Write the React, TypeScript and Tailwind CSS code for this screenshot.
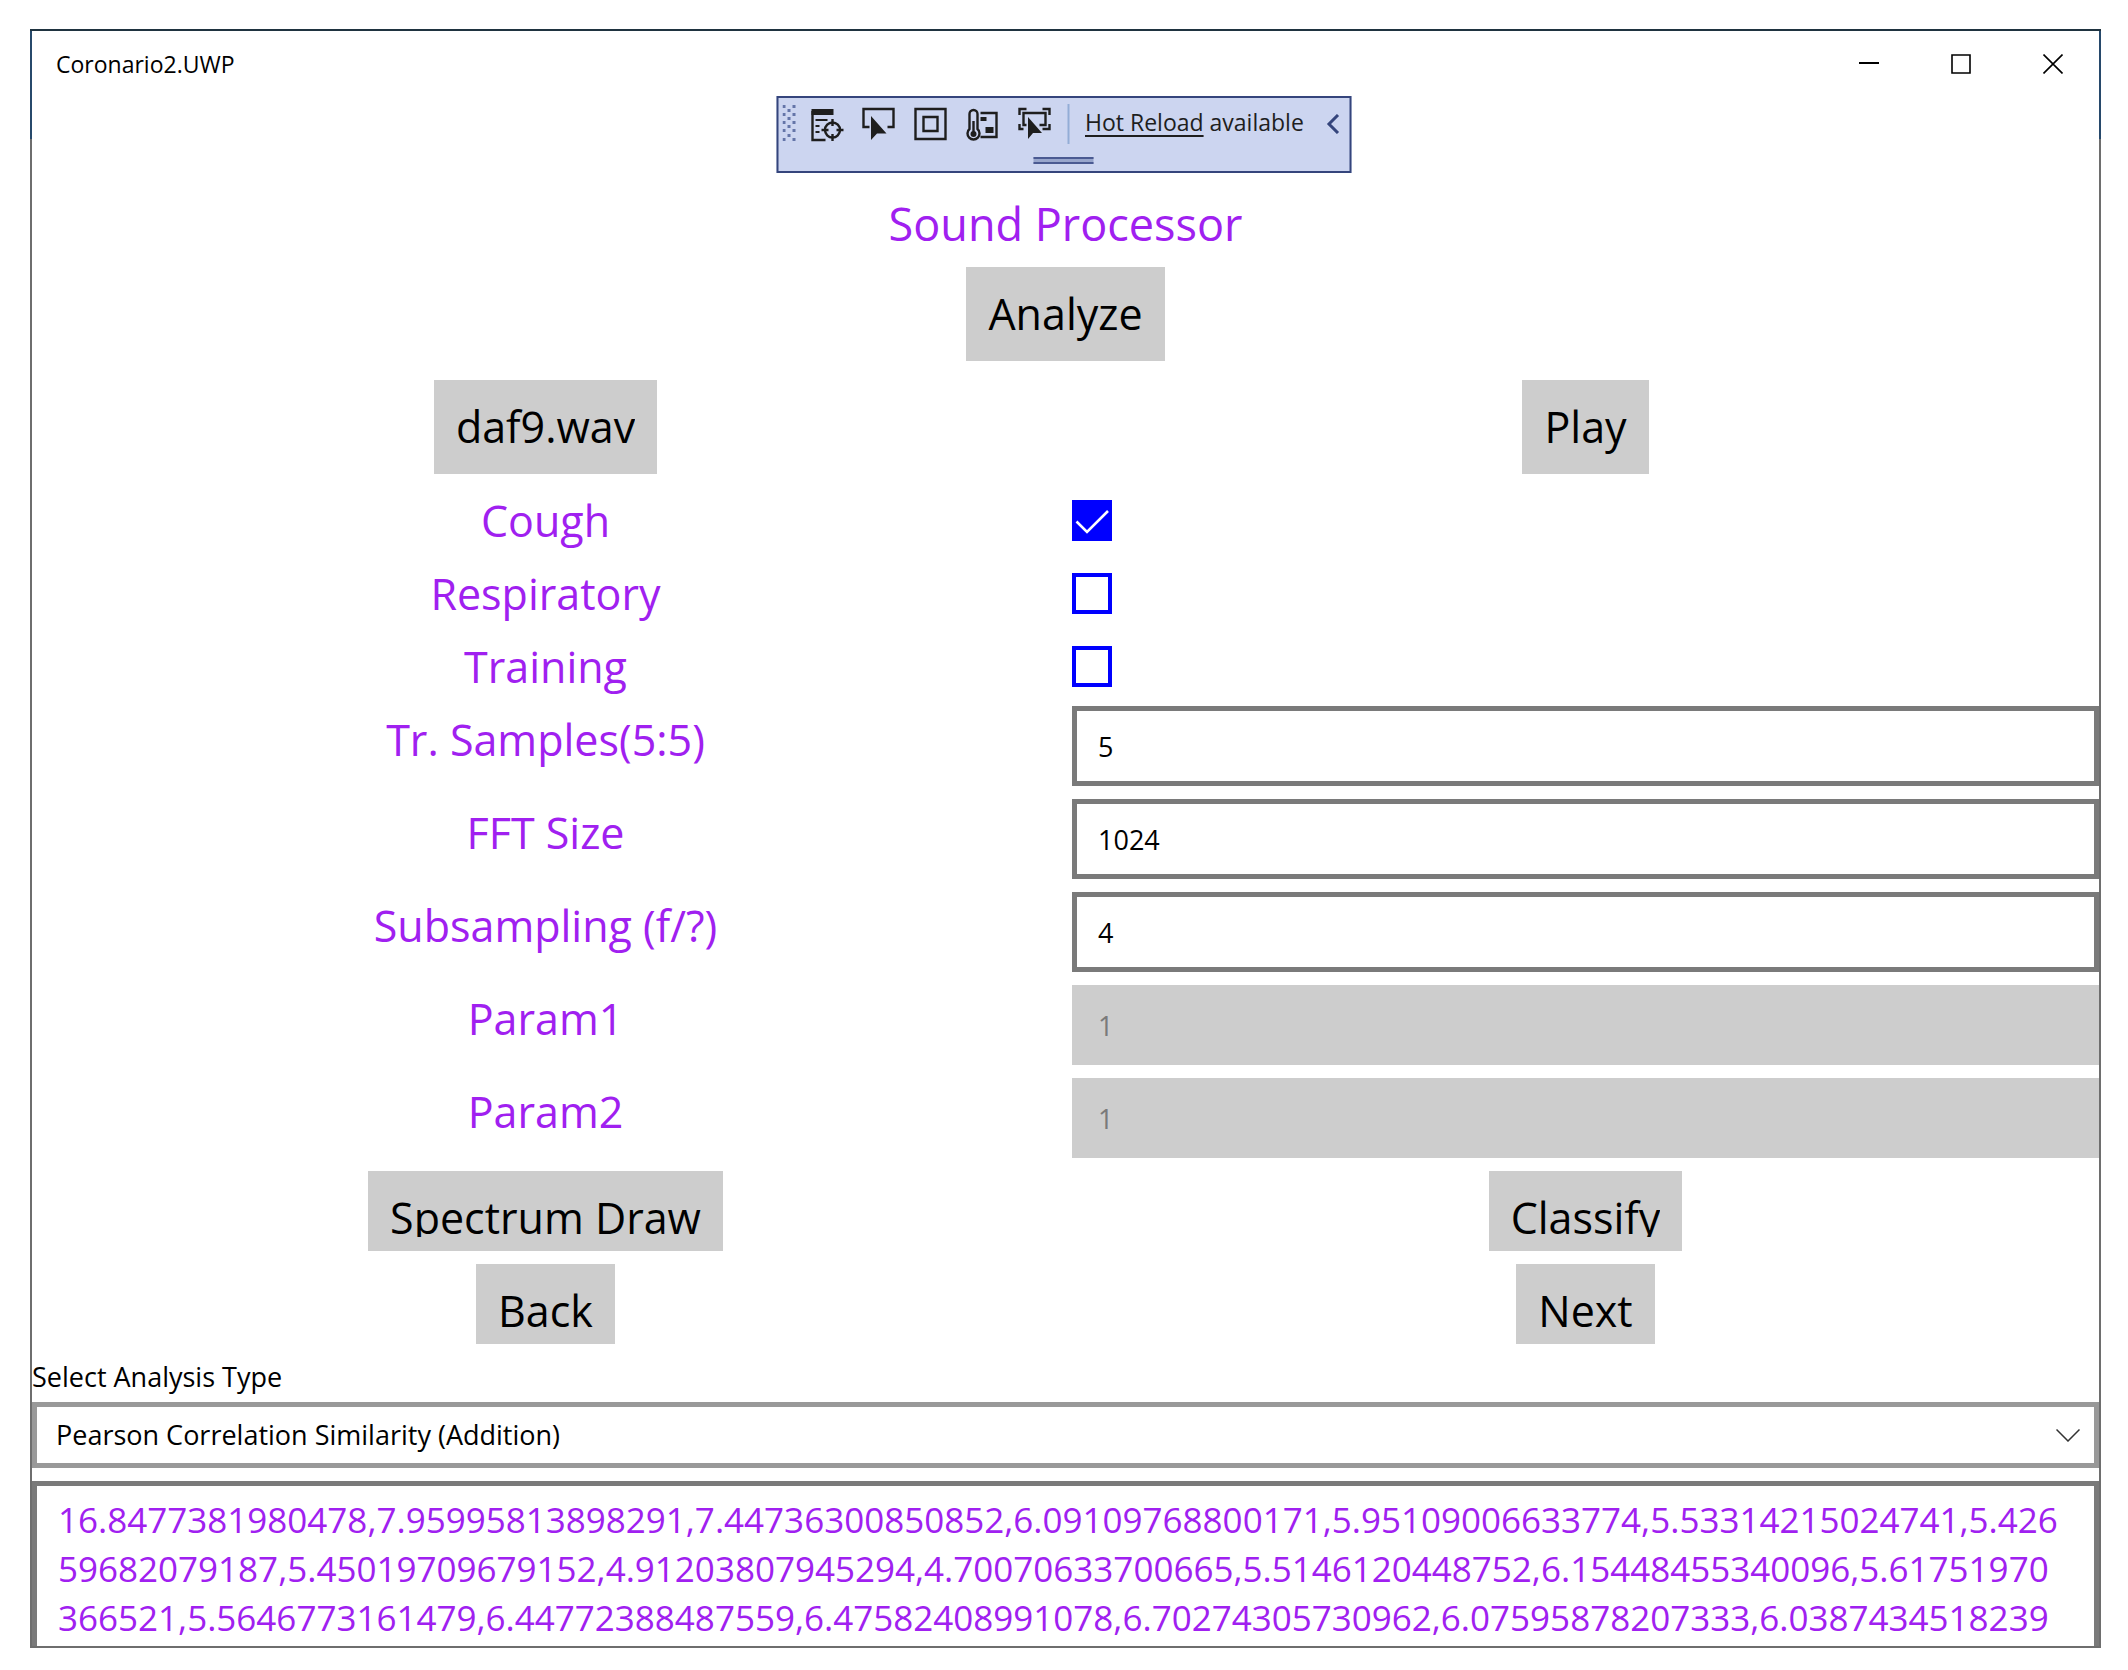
import { ReactNode, useState } from "react";
import clsx from "clsx";

const RESULT =
  "16.8477381980478,7.95995813898291,7.44736300850852,6.09109768800171,5.95109006633774,5.53314215024741,5.42659682079187,5.45019709679152,4.91203807945294,4.70070633700665,5.5146120448752,6.15448455340096,5.61751970366521,5.5646773161479,6.44772388487559,6.47582408991078,6.70274305730962,6.07595878207333,6.0387434518239";

const ANALYSIS_TYPES = ["Pearson Correlation Similarity (Addition)"];

function GrayButton({
  children,
  short,
}: {
  children: ReactNode;
  short?: boolean;
}) {
  return (
    <button
      type="button"
      className={clsx(
        "flex items-start justify-self-center bg-[#cdcdcd] px-[22px] py-[14px] text-[43px] leading-[66px] text-black",
        short ? "h-[80px]" : "h-[94px]",
      )}
    >
      <span className="block h-full overflow-hidden">{children}</span>
    </button>
  );
}

function FieldLabel({ id, children }: { id: string; children: ReactNode }) {
  return (
    <label
      htmlFor={id}
      className="text-center text-[43px] leading-[68px] text-[#a020f0]"
    >
      {children}
    </label>
  );
}

function CheckRow({
  id,
  label,
  defaultChecked,
}: {
  id: string;
  label: string;
  defaultChecked?: boolean;
}) {
  return (
    <div className="grid h-[60px] grid-cols-2 gap-x-[13px]">
      <FieldLabel id={id}>{label}</FieldLabel>
      <div className="grid justify-items-start pt-[13px]">
        <input
          id={id}
          type="checkbox"
          defaultChecked={defaultChecked}
          className="peer col-start-1 row-start-1 h-[41px] w-[40px] appearance-none border-4 border-[#0000ff] bg-white checked:bg-[#0000ff]"
        />
        <svg
          viewBox="0 0 41 41"
          className="pointer-events-none invisible col-start-1 row-start-1 size-[41px] peer-checked:visible"
          fill="none"
          stroke="#fff"
          strokeWidth="2.6"
        >
          <path d="M4.5 21.5 15 32 36 11" />
        </svg>
      </div>
    </div>
  );
}

function EntryRow({
  id,
  label,
  value,
  disabled,
}: {
  id: string;
  label: string;
  value: string;
  disabled?: boolean;
}) {
  return (
    <div className="grid h-[80px] grid-cols-2 gap-x-[13px]">
      <FieldLabel id={id}>{label}</FieldLabel>
      <input
        id={id}
        type="text"
        defaultValue={value}
        disabled={disabled}
        className="h-[80px] w-full border-[5px] border-[#7a7a7a] bg-white px-[21px] text-[27px] text-black outline-none disabled:border-[#cdcdcd] disabled:bg-[#cdcdcd] disabled:text-[#7a7a7a]"
      />
    </div>
  );
}

function ToolButton({ label, children }: { label: string; children: ReactNode }) {
  return (
    <button type="button" aria-label={label} className="size-[32px]">
      <svg
        viewBox="0 0 32 32"
        className="size-[32px] overflow-visible"
        fill="none"
        stroke="#1e1e1e"
        strokeWidth="2.4"
      >
        {children}
      </svg>
    </button>
  );
}

function DebugToolbar() {
  return (
    <div className="absolute top-[65px] left-1/2 -ml-[2px] flex h-[77px] w-[575px] -translate-x-1/2 flex-col border-2 border-[#35457c] bg-[#ccd5f0]">
      <div className="flex h-[52px] items-center pl-[4px]">
        <svg width="14" height="38" viewBox="0 0 14 38" fill="#6475a8">
          {[0, 8, 16, 24, 33].map((y) => (
            <g key={y}>
              <rect x="0" y={y} width="3" height="3" />
              <rect x="10" y={y} width="3" height="3" />
            </g>
          ))}
          {[4, 12, 20, 29].map((y) => (
            <rect key={y} x="5" y={y} width="3" height="3" />
          ))}
        </svg>
        <div className="ml-[14px] flex gap-[20px]">
          <ToolButton label="Go to Live Visual Tree">
            <path d="M1 1h22v6H1z" fill="#1e1e1e" stroke="none" />
            <path d="M2 3v29h13" />
            <path d="M5 12h12M5 18h4M5 24h4" strokeWidth="2" />
            <circle cx="22" cy="22" r="7.5" />
            <path d="M22 11v7M22 26v7M11 22h7M26 22h7" />
          </ToolButton>
          <ToolButton label="Select Element">
            <path d="M7 19H1V1h30v18h-6" />
            <path
              d="M8.500 8v24l6-6.500h9.500z"
              fill="#1e1e1e"
              stroke="none"
            />
          </ToolButton>
          <ToolButton label="Display Layout Adorners">
            <path d="M1 1h30v30H1z" />
            <path d="M9 9h14v14H9z" />
          </ToolButton>
          <ToolButton label="Track Focused Element">
            <path d="M14 5h16v24H14" />
            <path d="M14 9h6v4h-6zM19 19h8v6h-8z" fill="#1e1e1e" stroke="none" />
            <path d="M3 21V6a4 4 0 0 1 8 0v15a6 6 0 1 1-8 0z" fill="#ccd5f0" />
            <path d="M7 13v12" />
            <circle cx="7" cy="26" r="3" fill="#1e1e1e" stroke="none" />
          </ToolButton>
          <ToolButton label="Scan for Binding Failures">
            <path d="M1 7V1h7M24 1h7v6M1 16v5h4M31 16v5h-7" />
            <path d="M8 17H5V5h22v12h-6" />
            <path
              d="M9.500 9v22l5-6h9z"
              fill="#1e1e1e"
              stroke="none"
            />
          </ToolButton>
        </div>
        <span className="ml-[17px] h-[40px] w-[2px] bg-[#93add6]" />
        <span className="ml-[16px] pb-[4px] text-[23px] whitespace-nowrap text-[#1e1e1e]">
          <a href="#hot-reload" className="underline underline-offset-4">
            Hot Reload
          </a>{" "}
          available
        </span>
        <button type="button" aria-label="Collapse" className="mr-[10px] ml-auto">
          <svg
            width="13"
            height="20"
            viewBox="0 0 13 20"
            fill="none"
            stroke="#35457c"
            strokeWidth="3"
          >
            <path d="M11.500 1 2.500 10l9 9" />
          </svg>
        </button>
      </div>
      <div className="mx-auto mt-[7px] h-[7px] w-[60px] border-y-2 border-[#4a5a92] bg-[#98a6cc]" />
    </div>
  );
}

function WindowButtons() {
  return (
    <div className="flex h-full">
      <button type="button" aria-label="Minimize" className="grid w-[92px] place-items-center">
        <svg width="20" height="20" viewBox="0 0 20 20">
          <path d="M0 9h20" stroke="#000" strokeWidth="2" />
        </svg>
      </button>
      <button type="button" aria-label="Maximize" className="grid w-[92px] place-items-center">
        <svg width="20" height="20" viewBox="0 0 20 20" fill="none">
          <path d="M1 1h18v18H1z" stroke="#000" strokeWidth="1.600" />
        </svg>
      </button>
      <button type="button" aria-label="Close" className="grid w-[92px] place-items-center">
        <svg width="20" height="20" viewBox="0 0 20 20">
          <path d="M0.500 0.500l19 19M19.500 0.500l-19 19" stroke="#000" strokeWidth="1.600" />
        </svg>
      </button>
    </div>
  );
}

export default function App() {
  const [result, setResult] = useState(RESULT);

  return (
    <div className="flex h-screen min-h-[1500px] bg-white pt-[29px] pr-[27px] pb-[22px] pl-[30px] font-['Open_Sans','Noto_Sans',sans-serif] text-black">
      <div className="relative flex min-w-0 flex-1 flex-col border-t-2 border-[#1f3340]">
        <header className="flex h-[108px] items-start justify-between border-x-2 border-[#27496b]">
          <span className="pl-[24px] text-[23px] leading-[66px]">Coronario2.UWP</span>
          <div className="h-[66px]">
            <WindowButtons />
          </div>
        </header>

        <DebugToolbar />

        <main className="flex min-h-0 flex-1 flex-col border-x-2 border-b-2 border-[#6e6e6e] pt-[51px]">
          <h1 className="text-center text-[45px] leading-[68px] text-[#a020f0]">
            Sound Processor
          </h1>
          <div className="mt-[9px] grid">
            <GrayButton>Analyze</GrayButton>
          </div>
          <div className="mt-[19px] grid grid-cols-2 gap-x-[13px]">
            <GrayButton>daf9.wav</GrayButton>
            <GrayButton>Play</GrayButton>
          </div>

          <div className="mt-[13px] flex flex-col gap-[13px]">
            <CheckRow id="cough" label="Cough" defaultChecked />
            <CheckRow id="respiratory" label="Respiratory" />
            <CheckRow id="training" label="Training" />
            <EntryRow id="samples" label="Tr. Samples(5:5)" value="5" />
            <EntryRow id="fft" label="FFT Size" value="1024" />
            <EntryRow id="subsampling" label="Subsampling (f/?)" value="4" />
            <EntryRow id="param1" label="Param1" value="1" disabled />
            <EntryRow id="param2" label="Param2" value="1" disabled />
            <div className="grid grid-cols-2 gap-x-[13px]">
              <GrayButton short>Spectrum Draw</GrayButton>
              <GrayButton short>Classify</GrayButton>
            </div>
            <div className="grid grid-cols-2 gap-x-[13px]">
              <GrayButton short>Back</GrayButton>
              <GrayButton short>Next</GrayButton>
            </div>
          </div>

          <label htmlFor="analysis" className="mt-[13px] pb-[5px] text-[27px] leading-[40px]">
            Select Analysis Type
          </label>
          <div className="grid h-[66px] shrink-0 items-center">
            <select
              id="analysis"
              className="col-start-1 row-start-1 h-[66px] w-full appearance-none border-[5px] border-[#999999] bg-white px-[19px] text-[27px] outline-none"
            >
              {ANALYSIS_TYPES.map((type) => (
                <option key={type}>{type}</option>
              ))}
            </select>
            <svg
              className="pointer-events-none col-start-1 row-start-1 mr-[19px] justify-self-end"
              width="24"
              height="13"
              viewBox="0 0 24 13"
              fill="none"
              stroke="#333"
              strokeWidth="1.500"
            >
              <path d="M0.500 0.500 12 12 23.500 0.500" />
            </svg>
          </div>
          <textarea
            aria-label="Analysis result"
            value={result}
            onChange={(e) => setResult(e.target.value)}
            spellCheck={false}
            className="mt-[13px] min-h-0 w-full flex-1 resize-none overflow-hidden border-[5px] border-b-0 border-[#7a7a7a] bg-white pt-[9px] pr-[32px] pl-[21px] text-[35px] leading-[49px] break-all text-[#a020f0] outline-none"
          />
        </main>
      </div>
    </div>
  );
}
